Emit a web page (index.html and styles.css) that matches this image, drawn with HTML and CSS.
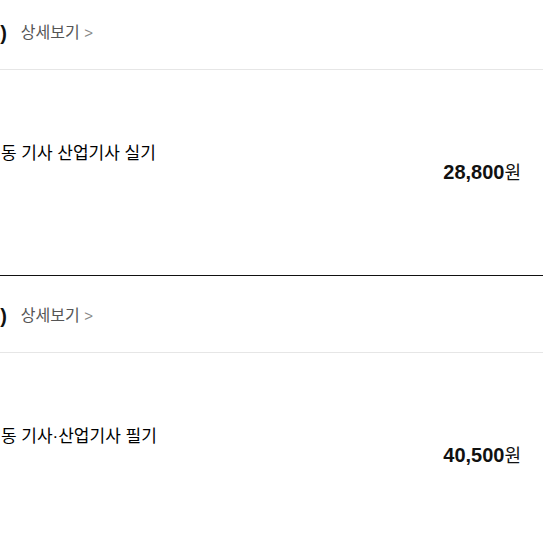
FILE: index.html
```html
<!DOCTYPE html>
<html lang="ko">
<head>
    <meta charset="UTF-8">
    <meta name="viewport" content="width=device-width, initial-scale=1.0">
    <title>교재 목록</title>
    <link rel="stylesheet" href="styles.css">
</head>
<body>

    <div class="list">
        <div class="item">
            <div class="item-head">
                <span class="count">교재 (1)</span>
                <a class="more" href="#">상세보기 <span class="arrow">&gt;</span></a>
            </div>
            <div class="item-body">
                <p class="title">공조냉동 기사 산업기사 실기</p>
                <p class="price"><b>28,800</b>원</p>
            </div>
        </div>

        <div class="item">
            <div class="item-head">
                <span class="count">교재 (2)</span>
                <a class="more" href="#">상세보기 <span class="arrow">&gt;</span></a>
            </div>
            <div class="item-body">
                <p class="title">공조냉동 기사·산업기사 필기</p>
                <p class="price"><b>40,500</b>원</p>
            </div>
        </div>
    </div>

</body>
</html>
```

FILE: styles.css
```css
body {
    margin: 0;
    font-family: "Liberation Sans", "Noto Sans CJK KR", sans-serif;
    background-color: #fff;
    color: #111;
    overflow: hidden;
}
.list {
    margin-top: -7px;
    margin-left: -60px;
}
.item {
    height: 282px;
    border-bottom: 1px solid #111;
}
.item-head {
    height: 76px;
    display: flex;
    align-items: center;
    gap: 14px;
    border-bottom: 1px solid #e6e6e6;
}
.count {
    font-size: 20px;
    font-weight: bold;
    color: #111;
}
.more {
    font-size: 16px;
    color: #555;
    text-decoration: none;
}
.arrow {
    font-size: 15px;
    color: #888;
}
.item-body {
    display: flex;
    justify-content: space-between;
    align-items: flex-start;
    padding: 69px 22px 0 0;
}
.title {
    margin: 0 0 0 14px;
    font-size: 17px;
    color: #000;
}
.price {
    margin: 19px 0 0;
    font-size: 18px;
    color: #111;
}
.price b {
    font-size: 20px;
}
```
